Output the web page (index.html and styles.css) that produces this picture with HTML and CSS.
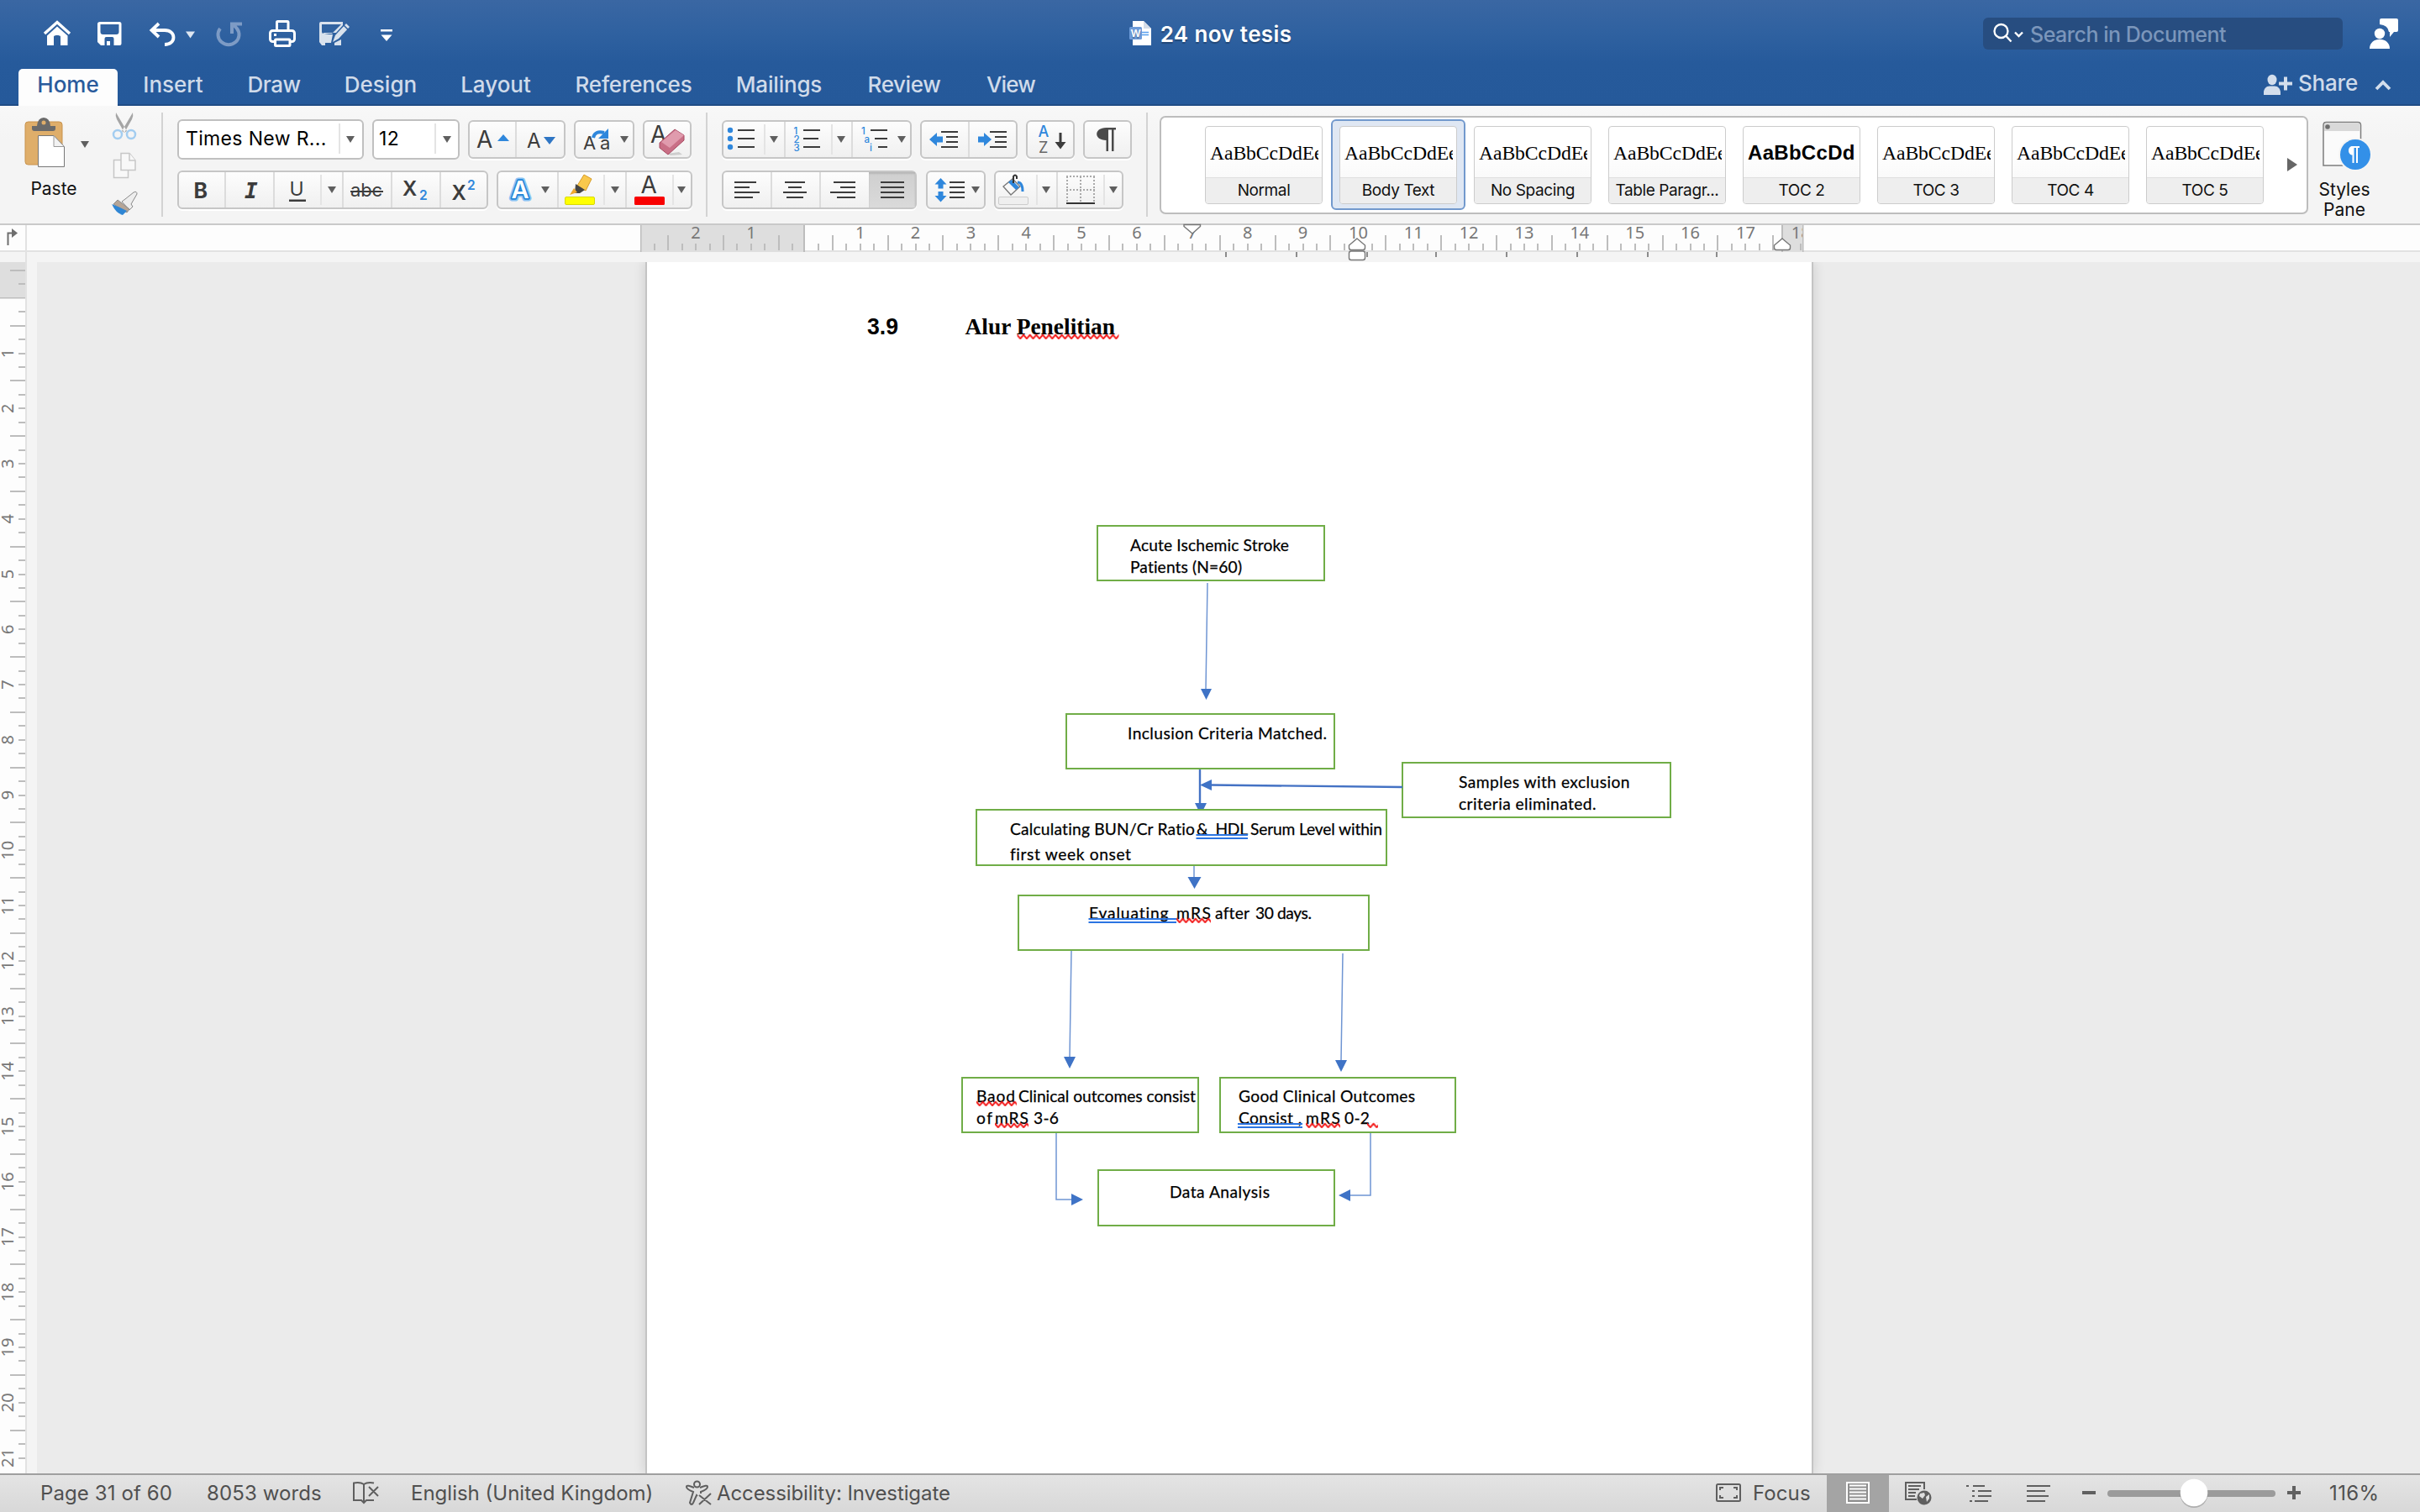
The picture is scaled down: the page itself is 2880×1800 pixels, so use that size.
FILE: index.html
```html
<!DOCTYPE html>
<html lang="en">
<head>
<meta charset="utf-8">
<title>24 nov tesis</title>
<link rel="stylesheet" href="styles.css">
</head>
<body>
<div class="window">

<header class="titlebar">
  <div class="title-row">
    <div class="quick">
      <svg width="60" height="40" viewBox="40 20 60 40"><path d="M53 40 68 26.500 83 40" class="w-line" stroke-width="3.500"/><path fill="#fff" d="M68 31.500 80.500 42.500V54H72V43.500c0-2-8-2-8 0V54H56V42.500z"/></svg>
      <svg width="60" height="40" viewBox="100 20 60 40"><path fill="#fff" fill-rule="evenodd" d="M119 26h23q2.500 0 2.500 2.500V52q0 2-2 2H120l-4-4V28.500q0-2.500 3-2.500zM119.500 29v9q0 3 3 3h16q3 0 3-3v-9zM124.500 54h2.500v-5h4v5h4.500v-8q0-2-2-2h-7q-2 0-2 2z"/></svg>
      <svg width="85" height="40" viewBox="160 20 85 40"><path class="w-line" stroke-width="3.800" d="M189 28 180.500 36 189 44M181 36H196c14 0 14 17 0 17"/><path fill="#dde6f1" d="M221 37.500h11l-5.500 8z"/></svg>
      <svg width="60" height="40" viewBox="245 20 60 40"><path fill="none" stroke="#7d9bc5" stroke-width="4" d="M262 34a12.500 12 0 1 0 20 0q-2-3-6-5M276 40V28.500h12"/></svg>
      <svg width="60" height="40" viewBox="305 20 60 40"><g fill="none" stroke="#fff" stroke-width="3"><rect x="329.500" y="25.500" width="13.500" height="11" rx="1"/><rect x="321.500" y="36.500" width="29" height="13" rx="3"/><rect x="327.500" y="47" width="17.500" height="7.500" rx="1" fill="#2c5f9f"/></g><path fill="#fff" d="M326 40h3v3h-3z"/></svg>
      <svg width="70" height="40" viewBox="365 20 70 40"><g opacity=".82"><path fill="#fff" fill-rule="evenodd" d="M382 26h26v4l-8 9h-16q3 2 12 2l-2 10h-7v3h-4l-3-4V28q0-2 2-2zM383 29v9q0 2 2 2h10l11-11zM398 54v-3l8-4v7z"/><path fill="#fff" d="m396 50 3-8 13-14 4 4-13 14z"/></g><path stroke="#2c5f9f" stroke-width="1.500" d="m409 30 5 5"/></svg>
      <svg width="50" height="40" viewBox="435 20 50 40"><path fill="#fff" d="M453 35h14v2.500h-14zM453.500 41.500h13L460 49z"/></svg>
    </div>
    <div class="doc-title">
      <svg width="38" height="40" viewBox="1343 20 38 40"><path fill="#fff" d="M1348 25h13l9 9v20h-22z"/><path fill="#d5dde8" d="m1361 25 9 9h-9z"/><path stroke="#5aa0ee" stroke-width="1.500" d="M1359 38.500h8M1359 41.500h8"/><rect x="1344" y="32" width="15" height="15" rx="1.500" fill="#6d9bd9"/><text x="1345.500" y="44" font-size="12" font-weight="600" fill="#fff">W</text></svg>
      <span>24 nov tesis</span>
    </div>
    <div class="title-right">
      <div class="search">
        <svg width="56" height="38" viewBox="2360 21 56 38"><circle cx="2381.500" cy="37" r="8" fill="none" stroke="#fff" stroke-width="2.300"/><path class="w-line" stroke-width="2.400" d="m2387.500 43 6 6.500M2398 38.500l4.500 4.500 4.500-4.500"/></svg>
        <span>Search in Document</span>
      </div>
      <svg width="40" height="40" viewBox="2816 20 40 40"><path fill="#fff" d="M2832 24q0-2 2-2h18q2 0 2 2v12q0 2-2 2h-3l-5 6v-6h-1q-1-8-11-9z"/><circle cx="2832" cy="40" r="6.200" fill="#fff"/><path fill="#fff" d="M2820 58c0-15 24-15 24 0z"/></svg>
    </div>
  </div>
  <nav class="tab-row">
    <span class="tab active">Home</span><span class="tab insert">Insert</span><span class="tab draw">Draw</span><span class="tab design">Design</span><span class="tab layout">Layout</span><span class="tab references">References</span><span class="tab mailings">Mailings</span><span class="tab review">Review</span><span class="tab view">View</span>
    <div class="share">
      <svg width="44" height="36" viewBox="2688 84 44 36"><ellipse cx="2700" cy="95" rx="5.500" ry="6.200" fill="#d3deec"/><path fill="#d3deec" d="M2690 113v-3c0-4 3-7.500 7-7.500h6c4 0 7 3.500 7 7.500v3zM2708 97.500h16v4h-16zM2714 91.500h4v16h-4z"/></svg>
      <span>Share</span>
      <svg width="60" height="36" viewBox="2806 84 60 36"><path fill="none" stroke="#d3deec" stroke-width="3.800" d="m2828 106 8-8 8 8"/></svg>
    </div>
  </nav>
</header>

<section class="ribbon">
  <div class="clipboard">
    <div class="paste">
      <svg width="84" height="62" viewBox="22 140 84 62"><rect x="30" y="145" width="44" height="51" rx="3.500" fill="#dfae6a" stroke="#c8924c"/><path fill="#6a6a6a" d="M38 150h6q1-10 8-10t8 10h6v3q0 3-3 3H41q-3 0-3-3z"/><circle cx="52" cy="146" r="2.500" fill="#dfae6a"/><path fill="#fff" stroke="#777" d="M45.500 161.500H64l12.500 13V198.500h-31z"/><path fill="#f2f2f2" stroke="#999" d="M64 161.500v13h12.500z"/><path class="caret" d="M96 168h10l-5 8z"/></svg>
      <span>Paste</span>
    </div>
    <div class="clip-tools">
      <svg width="36" height="40" viewBox="130 130 36 40"><path fill="#a5a5a5" d="m138 134 13 22-3 2-9-16q-2-4-1-8zM158 134l-13 22 3 2 9-16q2-4 1-8z"/><g fill="none" stroke="#a3cdf0" stroke-width="2.500"><ellipse cx="140" cy="160" rx="5" ry="5"/><ellipse cx="156" cy="160" rx="5" ry="5"/></g></svg>
      <svg width="36" height="40" viewBox="130 176 36 40"><g fill="#f8f8f8" stroke="#c6c6c6" stroke-width="1.500"><path d="M135.500 189.500h17v21h-17z"/><path d="M144 181.500h10l7 8.500v11.500h-17z"/><path d="M154 181.500v8.500h7"/></g></svg>
      <svg width="36" height="36" viewBox="130 224 36 36"><path fill="#ededed" stroke="#888" d="m149 237 10-8q4-2 4 2l-7 12 2 3-4 4-9-10z"/><path fill="#b6a596" stroke="#8c8c8c" d="m140 238 14 11-3 4-16-10z"/><path fill="#2f86d4" d="M133 243q8 3 18 8l-5 5q-8-2-13-13z"/></svg>
    </div>
  </div>
  <i class="divider"></i>

  <div class="section font">
    <div class="row">
      <div class="combo font-name"><span>Times New R...</span><i class="sep short"></i><svg width="26" height="44" viewBox="407 144 26 44"><path class="caret" d="M414 162h10l-5 8z"/></svg></div>
      <div class="combo font-size"><span>12</span><i class="sep short"></i><svg width="26" height="44" viewBox="520 144 26 44"><path class="caret" d="M528 162h10l-5 8z"/></svg></div>
      <div class="group g-size">
        <svg width="54" height="42" viewBox="559 145 54 42"><text x="567" y="176" font-size="28" class="glyph">A</text><path fill="#2f87dc" d="M592 168h14l-7-8z"/></svg>
        <i class="sep"></i>
        <svg width="56" height="42" viewBox="615 145 56 42"><text x="627" y="176" font-size="24" class="glyph">A</text><path fill="#2f76c4" d="M647 163h14l-7 9z"/></svg>
      </div>
      <div class="group g-case"><svg width="68" height="42" viewBox="685 145 68 42"><text x="694" y="178" font-size="22" class="glyph">A</text><text x="714" y="178" font-size="22" class="glyph">a</text><path fill="none" stroke="#2f87dc" stroke-width="4" d="M706 164q2-9 13-6"/><path fill="#2f87dc" d="M724 153v12h-12z"/><path class="caret" d="M738 162h10l-5 8z"/></svg></div>
      <div class="group"><svg width="54" height="42" viewBox="767 145 54 42"><text x="774" y="170" font-size="28" class="glyph">A</text><path fill="#999" opacity=".4" d="m794 183 14-2 4 3-14 1z"/><path fill="#c96f86" stroke="#a84a62" d="m803 154 11 7v6l-19 17-10-8v-6z"/><path fill="#e09bad" d="m804 155 10 6-17 15-10-7z"/></svg></div>
    </div>
    <div class="row">
      <div class="group g-style">
        <svg width="54" height="42" viewBox="213 205 54 42"><text x="230.500" y="235.500" font-size="25" font-weight="700" class="glyph">B</text></svg>
        <i class="sep"></i>
        <svg width="56" height="42" viewBox="269 205 56 42"><text x="291" y="235.500" font-size="26" font-style="italic" font-weight="600" class="glyph mono">I</text></svg>
        <i class="sep"></i>
        <svg width="54" height="42" viewBox="327 205 54 42"><text x="344.500" y="233" font-size="23" class="glyph">U</text><path fill="#3c3c3c" d="M344 237.500h20v2.500h-20z"/></svg>
        <i class="sep short"></i>
        <svg width="24" height="42" viewBox="383 205 24 42"><path class="caret" d="M390 222h10l-5 8z"/></svg>
        <i class="sep"></i>
        <svg width="56" height="42" viewBox="409 205 56 42"><text x="417" y="234" font-size="22" textLength="38" class="glyph">abc</text><path fill="#3c3c3c" d="M417 227h39v2h-39z"/></svg>
        <i class="sep"></i>
        <svg width="56" height="42" viewBox="467 205 56 42"><text x="479" y="232.500" font-size="24" class="glyph heavy">X</text><text x="499" y="238" font-size="15.500" class="blue heavy">2</text></svg>
        <i class="sep"></i>
        <svg width="54" height="42" viewBox="525 205 54 42"><text x="537.500" y="238" font-size="24" class="glyph heavy">X</text><text x="556" y="226" font-size="15.500" class="blue heavy">2</text></svg>
      </div>
      <div class="group g-color">
        <svg width="70" height="42" viewBox="593 205 70 42"><g font-size="29" font-weight="600" stroke-linejoin="round"><text x="608.500" y="236" stroke="#8cc4f4" stroke-width="7" fill="none">A</text><text x="608.500" y="236" stroke="#2484d6" stroke-width="3.500" fill="#fff">A</text><text x="608.500" y="236" fill="#fff">A</text></g><path class="caret" d="M644 222h10l-5 8z"/></svg>
        <i class="sep"></i>
        <svg width="53" height="42" viewBox="665 205 53 42"><path fill="#f9c84c" stroke="#d69b28" d="m695 208 9 5-7 14-10-6z"/><path fill="#444" d="m685 219 11 7-6 4h-6z"/><path fill="#f0a92e" d="m683 224 4 5-9 3z"/><rect x="672.500" y="234.500" width="35" height="9" rx="1.500" fill="#ff0" stroke="#d9d900"/></svg>
        <i class="sep short"></i>
        <svg width="24" height="42" viewBox="719 205 24 42"><path class="caret" d="M726 222h10l-5 8z"/></svg>
        <i class="sep"></i>
        <svg width="54" height="42" viewBox="745 205 54 42"><text x="761.500" y="230" font-size="28" class="glyph">A</text><rect x="754" y="234" width="36" height="10" rx="1.500" fill="#f80000"/></svg>
        <i class="sep short"></i>
        <svg width="20" height="42" viewBox="801 205 20 42"><path class="caret" d="M805 222h10l-5 8z"/></svg>
      </div>
    </div>
  </div>
  <i class="divider"></i>

  <div class="section para">
    <div class="row">
      <div class="group">
        <svg width="48" height="42" viewBox="861 145 48 42"><g fill="#2f87dc"><circle cx="869" cy="155" r="3.200"/><circle cx="869" cy="165" r="3.200"/><circle cx="869" cy="175" r="3.200"/></g><path class="lines" d="M878 155h20M878 165h20M878 175h20"/></svg>
        <i class="sep short"></i>
        <svg width="22" height="42" viewBox="911 145 22 42"><path class="caret" d="M916 162h10l-5 8z"/></svg>
        <i class="sep"></i>
        <svg width="54" height="42" viewBox="935 145 54 42"><g font-size="11.500" class="blue"><text x="944.500" y="159.500">1</text><text x="944.500" y="169.700">2</text><text x="944.500" y="180">3</text></g><path class="lines" d="M956 155h20M956 165h18M956 175h20"/></svg>
        <i class="sep short"></i>
        <svg width="22" height="42" viewBox="991 145 22 42"><path class="caret" d="M996 162h10l-5 8z"/></svg>
        <i class="sep"></i>
        <svg width="68" height="42" viewBox="1015 145 68 42"><g font-size="11.500" class="blue"><text x="1025" y="159.500">1</text><text x="1028.500" y="169.700">a</text><text x="1035" y="180">i</text></g><path class="lines" d="M1036 155h20M1041 165h15M1045 175h11"/><path class="caret" d="M1068 162h10l-5 8z"/></svg>
      </div>
      <div class="group">
        <svg width="55" height="42" viewBox="1097 145 55 42"><path fill="#2f87dc" d="m1106 166 9-8v4.500h7v7h-7v4.500z"/><path class="lines" d="M1120 157h20M1126 163h14M1126 169h14M1120 175h20"/></svg>
        <i class="sep"></i>
        <svg width="55" height="42" viewBox="1154 145 55 42"><path fill="#2f87dc" d="m1180 166-9-8v4.500h-7v7h7v4.500z"/><path class="lines" d="M1178 157h20M1184 163h14M1184 169h14M1178 175h20"/></svg>
      </div>
      <div class="group"><svg width="54" height="42" viewBox="1223 145 54 42"><text x="1235.500" y="163" font-size="18" class="blue">A</text><text x="1236" y="182" font-size="18" fill="#666">Z</text><path fill="#3c3c3c" d="M1260.500 158h3v11h5l-6.500 8.500-6.500-8.500h5z"/></svg></div>
      <div class="group"><svg width="54" height="42" viewBox="1291 145 54 42"><path fill="#4a4a4a" d="M1328 152v2.500h-2.500V180h-2.500v-25.500h-4V180h-2.500v-13c-15 0-15-15 0-15z"/></svg></div>
    </div>
    <div class="row">
      <div class="group g-align">
        <svg width="56" height="42" viewBox="861 205 56 42"><path class="lines" d="M874 217h26M874 223h18M874 229h30M874 235h22"/></svg>
        <i class="sep"></i>
        <svg width="56" height="42" viewBox="919 205 56 42"><path class="lines" d="M934 217h24M938 223h16M932 229h28M936 235h20"/></svg>
        <i class="sep"></i>
        <svg width="57" height="42" viewBox="977 205 57 42"><path class="lines" d="M992 217h26M1000 223h18M988 229h30M996 235h22"/></svg>
        <span class="pressed"><svg width="55" height="42" viewBox="1034 205 55 42"><path class="lines" d="M1048 217h28M1048 223h28M1048 229h28M1048 235h28"/></svg></span>
      </div>
      <div class="group"><svg width="67" height="42" viewBox="1104 205 67 42"><path fill="#2f87dc" d="m1119.500 212 7 7.500h-4v5h-6v-5h-4zM1119.500 240.500l7-7.500h-4v-5h-6v5h-4z"/><path class="lines" d="M1130 217h18M1130 223h18M1130 229h18M1130 235h18"/><path class="caret" d="M1156 222h10l-5 8z"/></svg></div>
      <div class="group">
        <svg width="48" height="42" viewBox="1185 205 48 42"><path fill="#f8f8f8" stroke="#777" stroke-width="1.300" d="m1194 222 11-9 9 9-11 10z"/><path fill="#2f87dc" d="m1200 217 4-3 9 9-4 3z"/><path fill="none" stroke="#333" stroke-width="2" d="M1206 218v-8q2-3 4 0v3"/><path fill="none" stroke="#2f87dc" stroke-width="3" d="M1211 217q6 0 6 11"/><rect x="1188.500" y="234.500" width="35" height="9" rx="1.500" fill="#efefef" stroke="#ccc"/></svg>
        <i class="sep short"></i>
        <svg width="22" height="42" viewBox="1235 205 22 42"><path class="caret" d="M1240 222h10l-5 8z"/></svg>
        <i class="sep"></i>
        <svg width="54" height="42" viewBox="1259 205 54 42"><path fill="none" stroke="#aaa" stroke-width="2" stroke-dasharray="2 2" d="M1269 210h34M1269 226h34M1270 210v30M1286 210v30M1302 210v30"/><path fill="#333" d="M1269 241h34v2h-34z"/></svg>
        <i class="sep short"></i>
        <svg width="20" height="42" viewBox="1315 205 20 42"><path class="caret" d="M1320 222h10l-5 8z"/></svg>
      </div>
    </div>
  </div>
  <i class="divider"></i>

  <div class="gallery">
    <div class="slot"><div class="card"><b>AaBbCcDdEe</b><span>Normal</span></div></div>
    <div class="slot selected"><div class="card"><b>AaBbCcDdEe</b><span>Body Text</span></div></div>
    <div class="slot"><div class="card"><b>AaBbCcDdEe</b><span>No Spacing</span></div></div>
    <div class="slot"><div class="card"><b>AaBbCcDdEe</b><span>Table Paragr...</span></div></div>
    <div class="slot"><div class="card bold"><b>AaBbCcDd</b><span>TOC 2</span></div></div>
    <div class="slot"><div class="card"><b>AaBbCcDdEe</b><span>TOC 3</span></div></div>
    <div class="slot"><div class="card"><b>AaBbCcDdEe</b><span>TOC 4</span></div></div>
    <div class="slot"><div class="card"><b>AaBbCcDdEe</b><span>TOC 5</span></div></div>
    <svg class="more" width="14" height="16" viewBox="0 0 14 16"><path fill="#666" d="M1 0v16l12-8z"/></svg>
  </div>

  <div class="styles-pane">
    <svg width="62" height="64" viewBox="2762 142 62 64"><path fill="#fbfbfb" stroke="#7d7d7d" stroke-width="1.500" d="M2766 197V149q0-3.500 3.500-3.500h37.500q3.500 0 3.500 3.500v48z"/><path fill="#d9d9d9" d="M2767 156v-7q0-2.500 2.500-2.500h37.500q2.500 0 2.500 2.500v7z"/><circle cx="2771" cy="151" r="2.800" fill="#6d6d6d"/><circle cx="2804" cy="184" r="20" fill="#f5f5f5"/><circle cx="2804" cy="184" r="18" fill="#3390e8"/><path fill="#fff" d="M2809 174v2h-2v18h-2v-18h-2.500v18h-2v-9.500c-6 0-6-10.500 0-10.500z"/></svg>
    <span>Styles<br>Pane</span>
  </div>
</section>

<div class="hruler">
  <svg id="hruler" width="2880" height="44" viewBox="0 268 2880 44">
    <rect x="762" y="268" width="195" height="32" fill="#dedede"/><rect x="2120" y="268" width="26" height="32" fill="#dedede"/>
    <path fill="#bdbdbd" d="M762 268h1.500v32H762zM956 268h2v32h-2zM2120 268h2v32h-2z"/>
    <path fill="#e2e2e2" d="M30 268h2v44h-2z"/>
    <path fill="none" stroke="#6e6e6e" stroke-width="2" d="M9.500 292v-14.500h6"/><path fill="#6e6e6e" d="m14 272 7 5.500-7 5.500z"/>
    <clipPath id="edge"><rect x="0" y="268" width="2146" height="44"/></clipPath>
    <g id="hticks" clip-path="url(#edge)"></g>
    <path fill="#bdbdbd" d="M2145 268h1.500v32h-1.500z"/>
    <path fill="#8c8c8c" d="M1458 300h2v6h-2zM1542 300h2v6h-2zM1626 300h2v6h-2zM1708 300h2v6h-2zM1792 300h2v6h-2zM1876 300h2v6h-2zM1960 300h2v6h-2zM2042 300h2v6h-2z"/>
    <g fill="#fff" stroke="#777" stroke-width="1.400"><path d="M1409 267.500v2l10 8.500 9.500-8.500v-2z"/><path d="m1615 284 9.500 8v3q0 2.500-2.500 2.500h-14q-2.500 0-2.500-2.500v-3z"/><rect x="1605.500" y="299" width="19" height="10.500" rx="2.500"/><path d="m2121 284 9.500 8v3q0 2.500-2.500 2.500h-14q-2.500 0-2.500-2.500v-3z"/></g>
  </svg>
</div>

<main class="workspace">
  <svg id="vruler" class="vruler" width="44" height="1442" viewBox="0 312 44 1442">
    <rect x="0" y="312" width="30" height="43" fill="#dedede"/><rect x="0" y="354" width="30" height="1.500" fill="#bdbdbd"/><rect x="30" y="312" width="2" height="1442" fill="#e2e2e2"/>
    <g id="vticks"></g>
  </svg>
  <article class="page">
    <svg width="1386" height="1442" viewBox="770 312 1386 1442">
      <defs>
        <pattern id="wave" width="7.600" height="7" patternUnits="userSpaceOnUse"><path fill="none" stroke="#f21212" stroke-width="1.900" d="M-1.200-.2 0 1.200 3.800 5.600 7.600 1.200l1.200-1.400"/></pattern>
      </defs>
      <text class="arial-h" x="1032" y="398" textLength="37" lengthAdjust="spacingAndGlyphs">3.9</text>
      <text class="times-h" x="1148.500" y="398" textLength="178.500">Alur Penelitian</text>

      <g class="boxes">
        <rect x="1306" y="626" width="270" height="65"/><rect x="1269" y="850" width="319" height="65"/><rect x="1669" y="908" width="319" height="65"/><rect x="1162" y="964" width="488" height="66"/><rect x="1212" y="1066" width="417" height="65"/><rect x="1145" y="1283" width="281" height="65"/><rect x="1452" y="1283" width="280" height="65"/><rect x="1307" y="1393" width="281" height="66"/>
      </g>

      <g class="thin"><path d="M1437 694 1435 821M1421 1031v14M1275 1132l-2 127M1598 1135l-2 128M1257 1349v79h20M1631 1349v74h-24"/></g>
      <g class="thick"><path d="M1428 916v44M1669 937l-228-2.500"/></g>
      <g fill="#3f73c6"><path d="M1429 820h13l-6.500 13zM1422 956h14l-3.500 7h-7zM1428 934.500l14-6.500v13zM1413.500 1044h16l-8 14zM1266 1258h14l-7 14zM1589 1262h14l-7 14zM1275 1421v14l14-7zM1607 1416v14l-14-7z"/></g>

      <g class="calibri">
        <text x="1345" y="656" textLength="189">Acute Ischemic Stroke</text>
        <text x="1345" y="682" textLength="133">Patients (N=60)</text>
        <text x="1342" y="880" textLength="237">Inclusion Criteria Matched.</text>
        <text x="1736" y="938" textLength="203.500">Samples with exclusion</text>
        <text x="1736" y="964" textLength="163.500">criteria eliminated.</text>
        <text x="1202" y="994" textLength="220">Calculating BUN/Cr Ratio</text>
        <text x="1424" y="994" textLength="61" xml:space="preserve">&amp;  HDL</text>
        <text x="1488" y="994" textLength="157">Serum Level within</text>
        <text x="1202" y="1024" textLength="144">first week onset</text>
        <text x="1296" y="1094" textLength="94.500">Evaluating</text>
        <text x="1400" y="1094" textLength="41">mRS</text>
        <text x="1446" y="1094" textLength="41">after</text>
        <text x="1494" y="1094" textLength="67">30 days.</text>
        <text x="1162" y="1312" textLength="46">Baod</text>
        <text x="1212" y="1312" textLength="211">Clinical outcomes consist</text>
        <text x="1162" y="1338" textLength="19">of</text>
        <text x="1184" y="1338" textLength="40">mRS</text>
        <text x="1230" y="1338" textLength="30">3-6</text>
        <text x="1474" y="1312" textLength="210">Good Clinical Outcomes</text>
        <text x="1474" y="1338" textLength="75">Consist ,</text>
        <text x="1554" y="1338" textLength="41">mRS</text>
        <text x="1600" y="1338" textLength="30">0-2</text>
        <text x="1392" y="1426" textLength="119">Data Analysis</text>
      </g>

      <path fill="#2b74e2" d="M1423.500 993h61.500v2h-61.500zM1423.500 997h61.500v2h-61.500zM1295.500 1093H1400v2h-104.500zM1295.500 1097H1400v2h-104.500zM1473 1337h77v2h-77zM1473 1341h77v2h-77z"/>
      <g fill="url(#wave)">
        <rect width="121" height="6.500" transform="translate(1210.500 397.500)"/>
        <rect width="41" height="6.500" transform="translate(1400 1092.500)"/>
        <rect width="48" height="6.500" transform="translate(1162 1310.500)"/>
        <rect width="40" height="6.500" transform="translate(1184 1336.500)"/>
        <rect width="41" height="6.500" transform="translate(1554 1336.500)"/>
        <rect width="13" height="6.500" transform="translate(1627 1336.500)"/>
      </g>
    </svg>
  </article>
</main>

<footer class="statusbar">
  <span class="s-page">Page 31 of 60</span>
  <span class="s-words">8053 words</span>
  <svg width="69" height="44" viewBox="420 1756 69 44"><path fill="none" stroke="#5f5f5f" stroke-width="2" d="M433 1767c-3-2-9-2-12-1.500V1786h9l3 3 3-3h9M433 1767v21M433 1767c3-2 9-2 12-1.500M439 1770l11 11M450 1770l-11 11"/></svg>
  <span class="s-lang">English (United Kingdom)</span>
  <svg width="37" height="44" viewBox="816 1756 37 44"><g fill="none" stroke="#5f5f5f" stroke-width="2"><circle cx="829.500" cy="1767" r="3.500"/><path d="M826 1771q-9-4-9-1t8 6l-4 13q2 4 4 0l4-9 1 1M833 1771q9-4 9-1t-8 6v2M832 1780l14 11M846 1778l-14 13"/></g></svg>
  <span class="s-acc">Accessibility: Investigate</span>
  <div class="status-right">
    <svg width="46" height="44" viewBox="2040 1756 46 44"><rect x="2043" y="1767" width="28" height="20" rx="1.500" fill="none" stroke="#5f5f5f" stroke-width="2"/><path fill="none" stroke="#5f5f5f" stroke-width="2" d="M2047 1774v-3h4M2063 1771h4v3M2067 1780v3h-4M2051 1783h-4v-3"/></svg>
    <span class="s-focus">Focus</span>
    <span class="view-on"><svg width="74" height="44" viewBox="2174 1756 74 44"><rect x="2198" y="1765" width="26" height="24" fill="#8f8f8f" stroke="#fff" stroke-width="2"/><path stroke="#fff" stroke-width="2" d="M2201 1768.500h20M2201 1772.500h20M2201 1776.500h20M2201 1780.500h20M2201 1784.500h20"/></svg></span>
    <svg width="74" height="44" viewBox="2248 1756 74 44"><path fill="none" stroke="#5f5f5f" stroke-width="2" d="M2281 1785h-13v-20h22v8M2271 1769h15M2271 1773h13M2271 1777h9M2271 1781h8"/><circle cx="2290" cy="1783" r="8.500" fill="#5f5f5f"/><path fill="#dedede" d="m2285 1778 5-1 1 3-3 4-4-3zM2292 1782l4-3v5l-3 4z"/></svg>
    <svg width="74" height="44" viewBox="2322 1756 74 44"><path stroke="#5f5f5f" stroke-width="2" d="M2340 1769h3M2348 1769h14M2347 1775h3M2354 1775h16M2347 1781h3M2354 1781h16M2344 1787h3M2350 1787h16"/></svg>
    <svg width="74" height="44" viewBox="2396 1756 74 44"><path stroke="#5f5f5f" stroke-width="2" d="M2412 1769h28M2412 1775h22M2412 1781h26M2412 1787h22"/></svg>
    <svg width="290" height="44" viewBox="2470 1756 290 44"><path fill="#606060" d="M2478 1775h16v4h-16zM2722 1775h16v4h-16zM2728 1769h4v16h-4z"/><rect x="2508" y="1774" width="200" height="8" rx="4" fill="#9b9b9b"/><circle cx="2611" cy="1778.500" r="16.500" fill="#000" opacity=".2"/><circle cx="2611" cy="1777" r="16.300" fill="#fff"/></svg>
    <span class="s-zoom">116%</span>
  </div>
</footer>
</div>
<script src="rulers.js"></script>
</body>
</html>
```
FILE: styles.css
```css
* { box-sizing: border-box; }
body { margin: 0; font-family: Inter, "Liberation Sans", sans-serif; color: #111; }
svg { display: block; flex: none; overflow: visible; }
.window { width: 2880px; height: 1800px; display: flex; flex-direction: column; overflow: hidden; background: #ebebeb; }

/* Title bar */
.titlebar { height: 126px; display: flex; flex-direction: column; background: linear-gradient(#3a67a3 0, #2f61a0 40px, #265a9b 75px, #25599a 100%); border-bottom: 2px solid #204c85; }
.title-row { height: 82px; display: grid; grid-template-columns: 1fr auto 1fr; padding-top: 20px; }
.quick { display: flex; padding-left: 40px; }
.w-line { fill: none; stroke: #fff; }
.doc-title { display: flex; color: #fff; font-weight: 600; font-size: 26px; line-height: 41px; letter-spacing: .35px; text-shadow: 0 2px 1px rgba(0, 0, 0, .25); }
.title-right { display: flex; justify-content: flex-end; padding-right: 24px; gap: 28px; }
.search { display: flex; width: 428px; height: 38px; margin-top: 1px; border-radius: 6px; background: #274d80; color: #7b96bb; font-size: 25px; font-weight: 500; line-height: 41px; letter-spacing: -.48px; }
.tab-row { height: 42px; display: flex; padding-left: 22px; font-size: 26px; font-weight: 500; line-height: 38px; color: #d0dbea; }
.tab { text-align: center; }
.active { width: 118px; margin-right: 30px; background: #fdfdfd; border-radius: 5px 5px 0 0; color: #2a5b9c; height: 44px; }
.insert { width: 72px; } .draw { width: 64px; margin-left: 52px; letter-spacing: -.5px; } .design { width: 88px; margin-left: 51px; } .layout { width: 86px; margin-left: 50px; }
.references { width: 142px; margin-left: 50px; letter-spacing: -.2px; } .mailings { width: 106px; margin-left: 49px; letter-spacing: -.2px; } .review { width: 92px; margin-left: 50px; letter-spacing: -.4px; } .view { width: 64px; margin-left: 49px; letter-spacing: -.8px; }
.share { display: flex; margin-left: auto; padding-right: 14px; padding-top: 2px; line-height: 29px; }
.share span { margin-left: -1px; letter-spacing: -.2px; }
.share svg:first-child { margin-left: -2px; }

/* Ribbon */
.ribbon { height: 142px; display: flex; background: linear-gradient(#f8f8f8, #f4f4f4 40px); border-bottom: 2px solid #c9c9c9; }
.clipboard { width: 192px; padding: 4px 0 0 22px; display: flex; }
.paste { width: 84px; padding-top: 10px; margin-right: 24px; text-align: center; font-size: 21px; line-height: 46px; }
.clip-tools { display: flex; flex-direction: column; gap: 7px; }
.divider { width: 2px; height: 124px; margin-top: 8px; background: #d3d3d3; }
.section { display: flex; flex-direction: column; gap: 13px; padding: 16px 0 0 17px; }
.font { width: 646px; }
.para { width: 522px; }
.row { display: flex; gap: 10px; height: 48px; align-items: center; }
.row + .row { height: 46px; }
.para .row:nth-child(2) { gap: 11px; }
.para .row:nth-child(2) .group:last-child { margin-left: -1px; }
.group { display: flex; height: 46px; border: 2px solid #c6c6c6; border-radius: 6px; background: linear-gradient(#fdfdfd, #f0f0f0); box-shadow: 0 2px 0 #fff; }
.g-style { width: 370px; }
.sep { width: 2px; height: 42px; background: #dcdcdc; flex: none; }
.sep.short { height: 36px; margin-top: 3px; background: #e4e4e4; }
.pressed { background: linear-gradient(#cfcfcf, #dadada); box-shadow: inset 0 2px 2px rgba(0, 0, 0, .12); }
.combo { display: flex; height: 48px; border: 2px solid #c0c0c0; border-radius: 6px; background: #fff; font-size: 23px; line-height: 43px; color: #000; }
.combo span { flex: 1; padding-left: 8px; letter-spacing: .35px; }
.font-name { width: 222px; } .font-size { width: 104px; }
.font-size span { padding-left: 6px; }
.caret { fill: #5f5f5f; }
.glyph { fill: #3c3c3c; }
.mono { font-family: "DejaVu Sans Mono", monospace; }
.blue { fill: #2f87dc; font-weight: 500; }
.heavy { font-weight: 600; }
.lines { fill: none; stroke: #3c3c3c; stroke-width: 2.200px; }

.gallery { width: 1367px; height: 117px; margin: 12px 0 0 14px; padding-left: 42px; display: flex; align-items: flex-start; background: #fff; border: 2px solid #bdbdbd; border-radius: 7px; }
.slot { width: 160px; height: 108px; margin-top: 2px; border: 2px solid transparent; border-radius: 6px; padding: 6px 8px; }
.selected { background: #dfe7f3; border-color: #7299cd; }
.card { width: 140px; height: 93px; border: 1.500px solid #ccc; border-radius: 4px; background: linear-gradient(#fff 30%, #f5f5f5); overflow: hidden; text-align: center; }
.card b { display: block; height: 60px; margin: 0 4px 0 5px; overflow: hidden; text-align: left; white-space: nowrap; font: 400 23.700px/62px "Liberation Serif", serif; color: #000; letter-spacing: -.1px; }
.card.bold b { font: 700 24px/61px "Liberation Sans", sans-serif; letter-spacing: .3px; }
.card span { display: block; height: 32px; border-top: 1px solid #e0e0e0; background: #eee; font-size: 19px; line-height: 29px; letter-spacing: -.4px; }
.more { margin: 48px 0 0 17px; }
.styles-pane { padding: 16px 0 0 11px; width: 84px; text-align: center; font-size: 21px; line-height: 24px; }
.styles-pane span { display: block; margin: 8px 0 0 1px; width: 62px; }
.styles-pane svg { margin-left: 3px; }

/* Rulers and document */
.hruler { height: 44px; background: linear-gradient(#fdfdfd 30px, #e2e2e2 30px, #e2e2e2 32px, #f4f4f4 32px); }
.hruler text, .vruler text { font: 20px "Noto Sans", sans-serif; fill: #777; text-anchor: middle; }
.workspace { height: 1442px; display: flex; }
.vruler { background: linear-gradient(90deg, #fdfdfd 30px, #f4f4f4 32px); overflow: hidden; }
.page { margin-left: 724px; width: 1390px; border: 2px solid #c4c4c4; border-width: 0 2px; background: #fff; box-shadow: 0 0 14px rgba(0, 0, 0, .14); clip-path: inset(0 -20px); }
.arial-h { font: 700 28.500px "Liberation Sans", sans-serif; }
.times-h { font: 700 27.400px "Liberation Serif", serif; }
.boxes { fill: #fff; stroke: #70ad47; stroke-width: 2px; }
.thin { fill: none; stroke: #6f95d3; stroke-width: 1.500px; }
.thick { fill: none; stroke: #4472c4; stroke-width: 2.400px; }
.calibri { font: 19.200px Lato, "Open Sans", sans-serif; font-variant-ligatures: none; fill: #000; stroke: #000; stroke-width: .25px; }

/* Status bar */
.statusbar { height: 46px; display: flex; padding-left: 48px; border-top: 2px solid #9f9f9f; background: linear-gradient(#e4e4e4, #d8d8d8); font-size: 24px; line-height: 43px; color: #505050; white-space: nowrap; }
.s-page { width: 198px; letter-spacing: .1px; } .s-words { width: 174px; letter-spacing: .1px; } .s-lang { width: 327px; } .s-acc { letter-spacing: -.09px; }
.status-right { display: flex; margin-left: auto; }
.s-focus { width: 88px; padding-right: 1px; letter-spacing: .1px; }
.view-on { background: #a4a4a4; }
.s-zoom { width: 120px; padding-left: 12px; letter-spacing: .4px; }
```
FILE: rulers.js
```js
// Centimetre scales: a label on each whole unit, a long tick on each half, short ticks on the quarters.
function horizontal() {
  const zero = 957.8, unit = 65.86;
  let out = '';
  for (let q = -11; q <= 72; q++) {
    const shift = q < 0 ? 2 : 0;
    const x = Math.round(zero + shift + q * unit / 4) - 1;
    if (q === 0 || x > 2144) continue;
    const long = Math.abs(q % 4) === 2;
    out += `<rect x="${x}" y="${long ? 280 : 290}" width="2" height="${long ? 18 : 8}" fill="#bdbdbd"/>`;
    if (q % 4 === 0) out += `<text x="${zero + shift + q * unit / 4}" y="284">${Math.abs(q / 4)}</text>`;
  }
  document.getElementById('hticks').innerHTML = out;
}

function vertical() {
  const zero = 354.8, unit = 65.75;
  let out = '';
  for (let q = -2; q <= 84; q++) {
    const y = Math.round(zero + q * unit / 4) - 1;
    if (q === 0) continue;
    const long = Math.abs(q % 4) === 2;
    out += `<rect x="${long ? 12 : 22}" y="${y}" width="${long ? 18 : 8}" height="2" fill="#bdbdbd"/>`;
    if (q % 4 === 0) out += `<text transform="translate(16 ${zero + q * unit / 4}) rotate(-90)">${q / 4}</text>`;
  }
  document.getElementById('vticks').innerHTML = out;
}

horizontal();
vertical();
```
